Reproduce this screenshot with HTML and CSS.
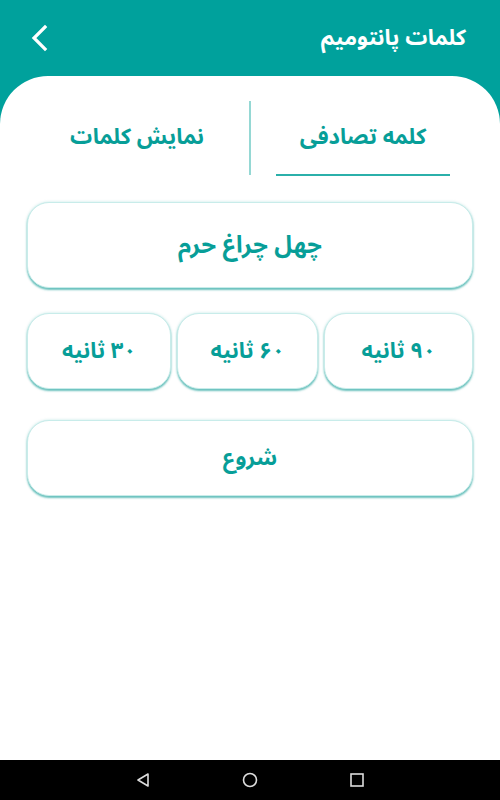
FILE: index.html
```html
<!DOCTYPE html>
<html lang="fa" dir="rtl">
<head>
<meta charset="utf-8">
<title>کلمات پانتومیم</title>
<link rel="stylesheet" href="styles.css">
</head>
<body>
<div class="screen">
  <header class="topbar">
    <h1 class="title">کلمات پانتومیم</h1>
    <button class="back" aria-label="back">
      <svg width="20" height="28" viewBox="0 0 20 28"><path d="M15 3 L4 14 L15 25" fill="none" stroke="#fff" stroke-width="3.2" stroke-linecap="square"/></svg>
    </button>
  </header>
  <main class="panel">
    <nav class="tabs">
      <div class="tab active"><span>کلمه تصادفی</span></div>
      <div class="divider"></div>
      <div class="tab"><span>نمایش کلمات</span></div>
    </nav>
    <div class="card word">چهل چراغ حرم</div>
    <div class="times">
      <div class="card time">۹۰ ثانیه</div>
      <div class="card time">۶۰ ثانیه</div>
      <div class="card time">۳۰ ثانیه</div>
    </div>
    <div class="card start">شروع</div>
  </main>
  <footer class="navbar">
    <svg width="16" height="16" viewBox="0 0 16 16"><path d="M13 2 L3 8 L13 14 Z" fill="none" stroke="#ddd" stroke-width="1.6" stroke-linejoin="round"/></svg>
    <svg width="16" height="16" viewBox="0 0 16 16"><circle cx="8" cy="8" r="6.5" fill="none" stroke="#ddd" stroke-width="1.6"/></svg>
    <svg width="16" height="16" viewBox="0 0 16 16"><rect x="2" y="2" width="12" height="12" fill="none" stroke="#ddd" stroke-width="1.6"/></svg>
  </footer>
</div>
</body>
</html>
```
FILE: styles.css
```css
* { box-sizing: border-box; }
html, body { margin: 0; padding: 0; }
body {
  width: 500px;
  height: 800px;
  font-family: "Noto Sans Arabic", "DejaVu Sans", sans-serif;
  background: #ffffff;
}
.screen {
  width: 500px;
  height: 800px;
  display: flex;
  flex-direction: column;
  background: #00a19c;
}
.topbar {
  height: 76px;
  display: flex;
  align-items: flex-start;
  justify-content: space-between;
  padding: 20px 34px 0 30px;
}
.title {
  margin: 0;
  color: #ffffff;
  font-size: 22px;
  font-weight: bold;
  line-height: 36px;
}
.back {
  background: none;
  border: 0;
  padding: 0;
  margin-top: 4px;
  width: 20px;
  height: 28px;
}
.panel {
  flex: 1;
  background: #ffffff;
  border-radius: 48px 48px 0 0;
  padding: 24px 27px 0 27px;
  display: flex;
  flex-direction: column;
}
.tabs {
  height: 76px;
  margin: 0 -2px;
  display: grid;
  grid-template-columns: 1fr 2px 1fr;
}
.tab {
  display: flex;
  align-items: center;
  justify-content: center;
  color: #079e98;
  font-size: 22px;
  font-weight: bold;
  position: relative;
  padding-bottom: 2px;
}
.tab.active::after {
  content: "";
  position: absolute;
  left: 25px;
  right: 25px;
  bottom: 0;
  height: 2px;
  background: #2bb0aa;
}
.divider {
  background: #95d8d4;
  margin: 1px 0 1px 0;
}
.card {
  background: #ffffff;
  border: 1px solid #c8ecea;
  border-radius: 22px;
  box-shadow: 0 2px 2px rgba(0, 150, 142, 0.55), 0 0 3px rgba(0, 160, 150, 0.25);
  color: #079e98;
  font-weight: bold;
  display: flex;
  align-items: center;
  justify-content: center;
}
.word {
  margin-top: 26px;
  height: 86px;
  font-size: 24px;
}
.times {
  margin-top: 25px;
  display: grid;
  grid-template-columns: 149fr 141fr 144fr;
  gap: 6px;
}
.time {
  height: 76px;
  font-size: 22px;
}
.start {
  margin-top: 31px;
  height: 76px;
  font-size: 22px;
}
.navbar {
  height: 40px;
  background: #000000;
  display: flex;
  align-items: center;
  justify-content: center;
  gap: 91px;
  direction: ltr;
}
```
